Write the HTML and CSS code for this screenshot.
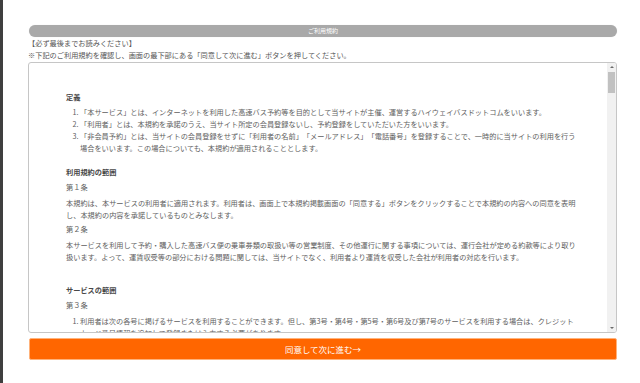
FILE: index.html
```html
<!DOCTYPE html>
<html lang="ja">
<head>
<meta charset="utf-8">
<title>ご利用規約</title>
<link rel="stylesheet" href="styles.css">
</head>
<body>
<div class="edge"></div>
<main class="page">
  <div class="pill">ご利用規約</div>
  <p class="notice">【必ず最後までお読みください】<br>※下記のご利用規約を確認し、画面の最下部にある「同意して次に進む」ボタンを押してください。</p>
  <div class="terms-box">
    <div class="terms">
      <section class="clause">
        <h3>定義</h3>
        <ol>
          <li>「本サービス」とは、インターネットを利用した高速バス予約等を目的として当サイトが主催、運営するハイウェイバスドットコムをいいます。</li>
          <li>「利用者」とは、本規約を承諾のうえ、当サイト所定の会員登録ないし、予約登録をしていただいた方をいいます。</li>
          <li>「非会員予約」とは、当サイトの会員登録をせずに「利用者の名前」「メールアドレス」「電話番号」を登録することで、一時的に当サイトの利用を行う場合をいいます。この場合についても、本規約が適用されることとします。</li>
        </ol>
      </section>
      <section class="clause">
        <h3>利用規約の範囲</h3>
        <div class="article">第１条</div>
        <p>本規約は、本サービスの利用者に適用されます。利用者は、画面上で本規約掲載画面の「同意する」ボタンをクリックすることで本規約の内容への同意を表明し、本規約の内容を承諾しているものとみなします。</p>
        <div class="article">第２条</div>
        <p>本サービスを利用して予約・購入した高速バス便の乗車券類の取扱い等の営業制度、その他運行に関する事項については、運行会社が定める約款等により取り扱います。よって、運賃収受等の部分における問題に関しては、当サイトでなく、利用者より運賃を収受した会社が利用者の対応を行います。</p>
      </section>
      <section class="clause spaced">
        <h3>サービスの範囲</h3>
        <div class="article">第３条</div>
        <ol class="narrow">
          <li>利用者は次の各号に掲げるサービスを利用することができます。但し、第3号・第4号・第5号・第6号及び第7号のサービスを利用する場合は、クレジットカード番号情報を追加して登録または入力する必要があります。</li>
          <li>空席照会および予約、購入サービス</li>
        </ol>
      </section>
    </div>
    <div class="scrollbar">
      <span class="arrow up"></span>
      <span class="thumb"></span>
      <span class="track"></span>
      <span class="arrow down"></span>
    </div>
  </div>
  <button class="agree" type="button">同意して次に進む→</button>
</main>
</body>
</html>
```
FILE: styles.css
```css
html, body {
  margin: 0;
  padding: 0;
  background: #ffffff;
}

body {
  display: flex;
  height: 383px;
  overflow: hidden;
  font-family: "Noto Sans CJK JP", "Noto Sans", sans-serif;
}

.edge {
  width: 3px;
  flex: none;
  background: #3f3f3f;
}

.page {
  flex: 1;
  padding: 25px 23px 0 25px;
  display: flex;
  flex-direction: column;
}

.pill {
  margin-left: 1px;
  height: 12px;
  line-height: 12px;
  border-radius: 6px;
  background: #a9a9a9;
  color: #ffffff;
  font-size: 6px;
  text-align: center;
  box-shadow: 0 0 1px rgba(0, 0, 0, 0.15);
}

.notice {
  margin: 1px 0 0;
  font-size: 7.2px;
  line-height: 11.5px;
  color: #555555;
  text-spacing-trim: space-all;
}

.terms-box {
  margin-top: 1px;
  height: 271px;
  box-sizing: border-box;
  border: 1px solid #c6c6c6;
  border-radius: 3px;
  display: flex;
  overflow: hidden;
}

.terms {
  flex: 1;
  min-width: 0;
  padding: 28px 26px 0 37px;
  overflow: hidden;
  font-size: 7.2px;
  line-height: 12px;
  color: #5e5e5e;
  text-spacing-trim: space-all;
}

.terms h3 {
  margin: 0 0 3px;
  font-size: 7.2px;
  line-height: 12px;
  font-weight: bold;
  color: #484848;
}

.terms ol {
  margin: 0;
  padding-left: 14px;
}

.terms ol.narrow {
  padding-right: 7px;
}

.terms .article {
  margin-bottom: 4px;
}

.terms p {
  margin: 0 0 2px;
}

.clause + .clause {
  margin-top: 12px;
}

.clause.spaced {
  margin-top: 21px;
}

.scrollbar {
  width: 9px;
  flex: none;
  background: #f1f1f1;
  display: flex;
  flex-direction: column;
}

.arrow {
  height: 8px;
  display: flex;
  align-items: center;
  justify-content: center;
}

.arrow::before {
  content: "";
  border-left: 2px solid transparent;
  border-right: 2px solid transparent;
}

.arrow.up::before {
  border-bottom: 2px solid #6a6a6a;
}

.arrow.down::before {
  border-top: 2px solid #6a6a6a;
}

.thumb {
  height: 21px;
  margin: 1px 1px 0;
  background: #c1c1c1;
}

.track {
  flex: 1;
}

.agree {
  margin: 5px 0 0 1px;
  height: 22px;
  border: 1px solid #ffb27a;
  border-radius: 2px;
  background: #ff6600;
  color: #ffffff;
  font-family: "Noto Sans CJK JP", "Noto Sans", sans-serif;
  font-size: 8.5px;
  padding: 0;
  cursor: pointer;
}
```
